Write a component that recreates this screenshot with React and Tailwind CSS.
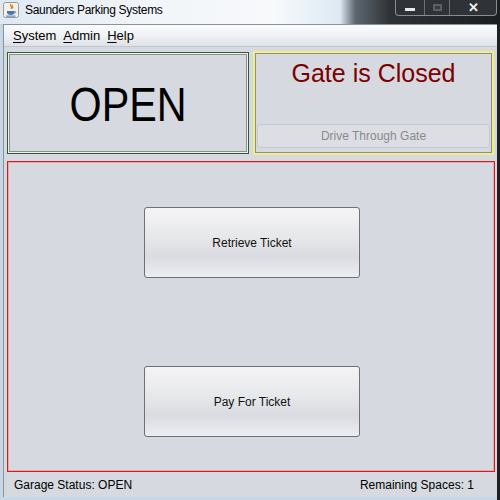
import React from 'react';

const font = { fontFamily: '"Liberation Sans", Arial, sans-serif' };

const JavaIcon = () => (
  <svg width="16" height="16" viewBox="0 0 16 16">
    <rect x="0.5" y="0.5" width="15" height="15" rx="2" fill="#f3f0ea" stroke="#9a9a9a" />
    <path d="M8 2c-2 2 2 2.5 0 5M9.5 3c-1.2 1.3 1.2 1.8 0 3.5" stroke="#e0761b" strokeWidth="1.2" fill="none" />
    <path d="M4 9h7.5v1.5c0 1.6-1.5 2.5-3.7 2.5S4 12.1 4 10.5z" fill="#4a78b5" />
    <path d="M11.5 9.4c1.6 0 1.6 1.9 0 1.9" stroke="#4a78b5" strokeWidth="0.9" fill="none" />
    <rect x="3" y="13.6" width="9.5" height="1" fill="#4a78b5" />
  </svg>
);

const WindowControls = () => (
  <div className="absolute right-[3px] top-0 flex h-[16px] rounded-b-[4px] border border-t-0 border-[#8a8c90] bg-[#2f3236] overflow-hidden">
    <div className="w-[29px] flex items-center justify-center border-r border-[#6c6f73]">
      <div className="w-[10px] h-[3px] bg-[#e8e8e8] mt-[3px]" />
    </div>
    <div className="w-[25px] flex items-center justify-center border-r border-[#6c6f73]">
      <div className="w-[9px] h-[7px] border-2 border-[#5c5f63] bg-[#3a3d40]" />
    </div>
    <div className="w-[46px] flex items-center justify-center text-[#f0f0f0] text-[13px] font-bold leading-none">
      ✕
    </div>
  </div>
);

const BigButton = ({ label }) => (
  <button
    className="w-[216px] h-[71px] rounded-[3px] border border-[#707070] bg-[linear-gradient(180deg,#f4f4f5_0%,#e6e7ea_45%,#d9dbe0_70%,#eceef3_100%)] text-[12px] text-[#111]"
    style={font}
  >
    {label}
  </button>
);

const Mnemonic = ({ first, rest }) => (
  <span>
    <span className="underline underline-offset-2">{first}</span>
    {rest}
  </span>
);

export default function App() {
  return (
    <div className="w-[500px] h-[500px] overflow-hidden relative bg-[#1e2124]" style={font}>
      {/* Title bar */}
      <div className="h-[24px] relative bg-[linear-gradient(90deg,#dfe8f2_0%,#f2f5f9_30%,#f7f9fb_55%,#dde9f3_68%,#5e6871_71%,#2e3236_78%,#1b1e21_100%)]">
        <div className="absolute left-[3px] top-[2px]">
          <JavaIcon />
        </div>
        <div className="absolute left-[25px] top-[4px] text-[12px] tracking-[-0.3px] text-black leading-none">
          Saunders Parking Systems
        </div>
        <WindowControls />
      </div>

      {/* Window body */}
      <div className="absolute left-0 top-[24px] w-[497px] h-[476px] bg-[#c9d6e4] pl-[3px] pb-[3px]">
        <div className="w-full h-full border-l border-t border-[#8893a0] flex flex-col bg-[#d6d9df]">
          {/* Menu bar */}
          <div className="h-[22px] shrink-0 flex items-center gap-[7px] pl-[9px] pt-[1px] text-[13px] text-black bg-[linear-gradient(180deg,#fbfbfc_0%,#eef0f3_55%,#dde1e7_100%)] border-b border-[#c2c7cf]">
            <Mnemonic first="S" rest="ystem" />
            <Mnemonic first="A" rest="dmin" />
            <Mnemonic first="H" rest="elp" />
          </div>

          {/* Content */}
          <div className="flex-1 flex flex-col px-[3px] pt-[4px]">
            <div className="flex gap-[4px] h-[104px]">
              <div className="w-[243px] h-[102px] mt-[1px] border border-[#2d5e2d]">
                <div className="w-full h-full border border-[#eef0f3]">
                  <div className="w-full h-full border border-[#8e8e8e] flex items-center justify-center text-black leading-none pt-[4px]">
                    <span className="text-[48px] scale-x-[0.86] inline-block">OPEN</span>
                  </div>
                </div>
              </div>
              <div className="w-[242px] h-[104px] border-2 border-[#f0f07a]">
                <div className="w-full h-full border border-[#8e8e8e] flex flex-col items-center px-[1px] pb-[4px]">
                  <div className="text-[25px] text-[#7a0000] leading-none mt-[7px]">Gate is Closed</div>
                  <div className="flex-1" />
                  <div className="w-full h-[24px] rounded-[3px] border border-[#c6c9ce] bg-[#dcdee3] flex items-center justify-center text-[12px] text-[#8a8a8a]">
                    Drive Through Gate
                  </div>
                </div>
              </div>
            </div>

            <div className="mt-[6px] w-[488px] h-[311px] border border-[#d01c1c]">
              <div className="w-full h-full border border-[#eaa8a8] flex flex-col items-center pt-[44px] pl-[2px] gap-[88px]">
                <BigButton label="Retrieve Ticket" />
                <BigButton label="Pay For Ticket" />
              </div>
            </div>

            <div className="flex-1 flex items-center justify-between pl-[7px] pr-[20px] pt-[1px] text-[12px] text-black">
              <span>Garage Status: OPEN</span>
              <span>Remaining Spaces: 1</span>
            </div>
          </div>
        </div>
      </div>
    </div>
  );
}
